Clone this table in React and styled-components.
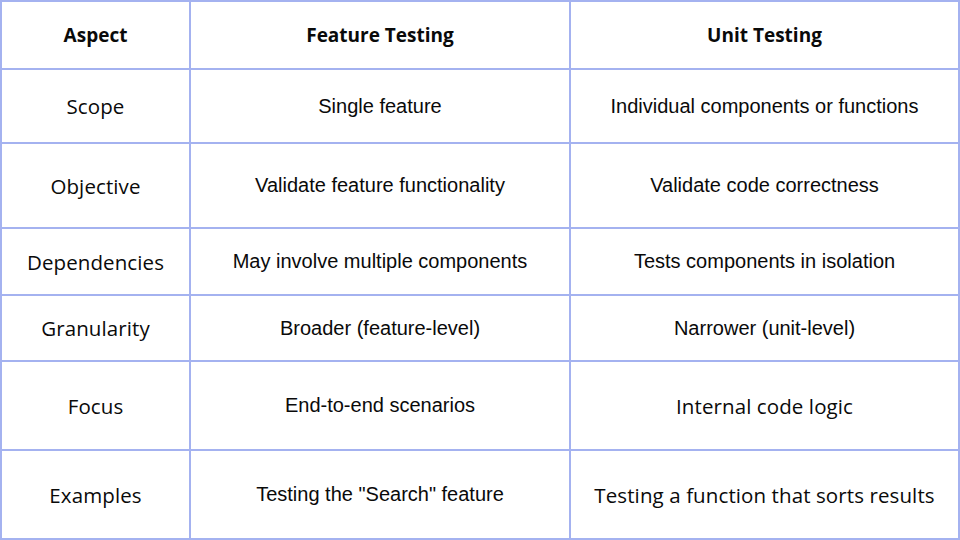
import React from "react";
import styled, { createGlobalStyle } from "styled-components";

const rows = [
  { aspect: "Scope", feature: "Single feature", unit: "Individual components or functions", unitSoft: false },
  { aspect: "Objective", feature: "Validate feature functionality", unit: "Validate code correctness", unitSoft: false },
  { aspect: "Dependencies", feature: "May involve multiple components", unit: "Tests components in isolation", unitSoft: false },
  { aspect: "Granularity", feature: "Broader (feature-level)", unit: "Narrower (unit-level)", unitSoft: false },
  { aspect: "Focus", feature: "End-to-end scenarios", unit: "Internal code logic", unitSoft: true },
  { aspect: "Examples", feature: 'Testing the "Search" feature', unit: "Testing a function that sorts results", unitSoft: true },
];

const App = () => {
  return (
    <>
      <GlobalStyle />
      <Table>
        <Cell $kind="head">Aspect</Cell>
        <Cell $kind="head">Feature Testing</Cell>
        <Cell $kind="head">Unit Testing</Cell>
        {rows.map((r) => (
          <React.Fragment key={r.aspect}>
            <Cell $kind="soft">{r.aspect}</Cell>
            <Cell $kind="plain">{r.feature}</Cell>
            <Cell $kind={r.unitSoft ? "soft" : "plain"}>{r.unit}</Cell>
          </React.Fragment>
        ))}
      </Table>
    </>
  );
};

export default App;

const GlobalStyle = createGlobalStyle`
  html, body {
    margin: 0;
    padding: 0;
    background: #ffffff;
  }
`;

const Table = styled.div`
  width: 960px;
  height: 540px;
  box-sizing: border-box;
  display: grid;
  grid-template-columns: 187px 378px 387px;
  grid-template-rows: 66px 72px 83px 65px 64px 87px 87px;
  gap: 2px;
  padding: 2px;
  background-color: #a4b2f0;
`;

const fonts = {
  head: `font-family: "Open Sans", sans-serif; font-weight: 700; font-size: 19px;`,
  soft: `font-family: "Open Sans", sans-serif; font-weight: 400; font-size: 20.5px; letter-spacing: 0.1px;`,
  plain: `font-family: "Liberation Sans", Arial, sans-serif; font-weight: 400; font-size: 20px;`,
};

const Cell = styled.div`
  background-color: #ffffff;
  color: #0a0a0a;
  display: flex;
  align-items: center;
  justify-content: center;
  text-align: center;
  ${(p) => fonts[p.$kind]}
`;
